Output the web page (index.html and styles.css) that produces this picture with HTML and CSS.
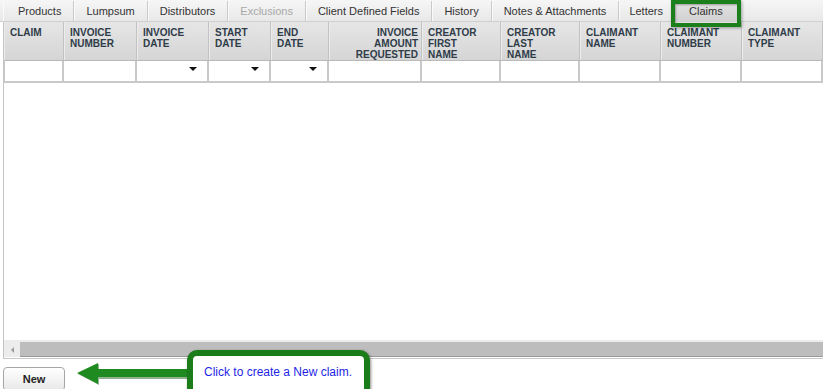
FILE: index.html
```html
<!DOCTYPE html>
<html lang="en">
<head>
    <meta charset="UTF-8">
    <title>Claims</title>
    <link rel="stylesheet" href="styles.css">
</head>
<body>
    <div class="page">
        <div class="tabs">
            <div class="tab">Products</div>
            <div class="tab">Lumpsum</div>
            <div class="tab">Distributors</div>
            <div class="tab disabled">Exclusions</div>
            <div class="tab">Client Defined Fields</div>
            <div class="tab">History</div>
            <div class="tab">Notes &amp; Attachments</div>
            <div class="tab narrow">Letters</div>
            <div class="tab active">Claims</div>
        </div>

        <div class="grid">
            <div class="head">
                <div class="col">CLAIM</div>
                <div class="col">INVOICE<br>NUMBER</div>
                <div class="col">INVOICE<br>DATE</div>
                <div class="col">START<br>DATE</div>
                <div class="col">END<br>DATE</div>
                <div class="col right">INVOICE<br>AMOUNT<br>REQUESTED</div>
                <div class="col">CREATOR<br>FIRST<br>NAME</div>
                <div class="col">CREATOR<br>LAST<br>NAME</div>
                <div class="col">CLAIMANT<br>NAME</div>
                <div class="col">CLAIMANT<br>NUMBER</div>
                <div class="col">CLAIMANT<br>TYPE</div>
            </div>
            <div class="filters">
                <div class="cell"></div>
                <div class="cell"></div>
                <div class="cell select"><span class="caret"></span></div>
                <div class="cell select"><span class="caret"></span></div>
                <div class="cell select"><span class="caret"></span></div>
                <div class="cell"></div>
                <div class="cell"></div>
                <div class="cell"></div>
                <div class="cell"></div>
                <div class="cell"></div>
                <div class="cell"></div>
            </div>
            <div class="rows"></div>
            <div class="hscroll">
                <div class="scroll-left"><span class="left-caret"></span></div>
                <div class="thumb"></div>
            </div>
        </div>

        <div class="footer">
            <button class="new-btn">New</button>
        </div>

        <!-- help annotation -->
        <svg class="hint-arrow" width="120" height="30" viewBox="0 0 120 30">
            <polygon points="2,16 23,6 23,12 118,12 118,21 23,21 23,27" fill="#0d4f0d" opacity="0.45"/>
            <polygon points="1,15 22,5 22,11 117,11 117,19 22,19 22,26" fill="#1f8a1f"/>
        </svg>
        <div class="hint">Click to create a New claim.</div>
    </div>
</body>
</html>
```

FILE: styles.css
```css
body {
    margin: 0;
    font-family: "Liberation Sans", Arial, sans-serif;
    background-color: #fff;
    overflow: hidden;
}
.page {
    position: relative;
    width: 823px;
    height: 389px;
    overflow: hidden;
}
.tabs {
    display: flex;
    height: 22px;
    padding-left: 3px;
    background: linear-gradient(#f6f6f6, #e8e8e8);
    border-bottom: 1px solid #cfcfcf;
    box-sizing: border-box;
}
.tab {
    position: relative;
    padding: 0 12px;
    font-size: 11px;
    line-height: 21px;
    color: #333;
    border-right: 1px solid #cacaca;
    box-shadow: inset 1px 0 #fafafa;
    margin-top: 1px;
}
.tab:first-child {
    padding-left: 15px;
}
.tab.narrow {
    padding: 0 10px;
}
.tab.disabled {
    color: #a8a8a8;
}
.tab.active {
    background: linear-gradient(#e2e2e2, #d2d2d2);
    padding: 0 15px;
    border-right: none;
}
.tab.active::after {
    content: "";
    position: absolute;
    top: -1px;
    left: -3px;
    right: -3px;
    bottom: -6px;
    border: 4px solid #1b7f1b;
    box-shadow: 1px 1px 3px rgba(0,0,0,0.35), inset 1px 1px 2px rgba(0,0,0,0.3);
    z-index: 2;
}
.grid {
    margin-left: 3px;
    border-left: 1px solid #c4c4c4;
    border-bottom: 1px solid #c8c8c8;
}
.head, .filters {
    display: grid;
    grid-template-columns: 60px 73px 72px 62px 58px 93px 79px 79px 81px 81px 1fr;
}
.head {
    height: 39px;
    border-bottom: 1px solid #b9b9b9;
    box-sizing: border-box;
}
.col {
    padding: 5px 5px 0 6px;
    font-size: 10px;
    font-weight: bold;
    line-height: 11px;
    color: #2f3c49;
    background: linear-gradient(#e6e6e6, #d5d5d5);
    border-right: 1px solid #c2c2c2;
    box-shadow: inset 1px 0 #ececec;
}
.col.right {
    text-align: right;
    padding-right: 3px;
}
.filters {
    height: 22px;
}
.cell {
    background-color: #fff;
    border-right: 2px solid #c9c9c9;
    border-bottom: 2px solid #c9c9c9;
    box-sizing: border-box;
}
.cell:first-child {
    border-left: 1px solid #c9c9c9;
}
.select {
    display: flex;
    justify-content: flex-end;
    align-items: flex-start;
    padding: 6px 10px 0 0;
}
.caret {
    width: 0;
    height: 0;
    border-left: 4px solid transparent;
    border-right: 4px solid transparent;
    border-top: 4px solid #111;
}
.rows {
    height: 257px;
}
.hscroll {
    display: flex;
    height: 17px;
    background-color: #ececec;
    border-bottom: 1px solid #fff;
}
.scroll-left {
    width: 16px;
    display: flex;
    align-items: center;
    padding: 2px 0 0 7px;
    box-sizing: border-box;
}
.left-caret {
    width: 0;
    height: 0;
    border-top: 3px solid transparent;
    border-bottom: 3px solid transparent;
    border-right: 3px solid #9a9a9a;
}
.thumb {
    flex: 1;
    margin-top: 2px;
    background-color: #bdbdbd;
    border-bottom: 1px solid #999;
}
.footer {
    padding: 8px 0 0 3px;
}
.new-btn {
    width: 62px;
    height: 24px;
    font-family: "Liberation Sans", Arial, sans-serif;
    font-size: 11px;
    font-weight: bold;
    color: #222;
    background: linear-gradient(#ffffff, #e8e8e8);
    border: 1px solid #a6a6a6;
    border-radius: 4px;
    padding: 0;
}
.hint-arrow {
    position: absolute;
    left: 76px;
    top: 358px;
}
.hint {
    position: absolute;
    left: 187px;
    top: 350px;
    width: 160px;
    height: 40px;
    padding: 9px 0 0 11px;
    border: 6px solid #1a7d1a;
    border-radius: 10px;
    background-color: #fff;
    box-shadow: 1px 1px 3px rgba(0,0,0,0.45);
    font-size: 12px;
    line-height: 14px;
    color: #1f1fe6;
}
```
